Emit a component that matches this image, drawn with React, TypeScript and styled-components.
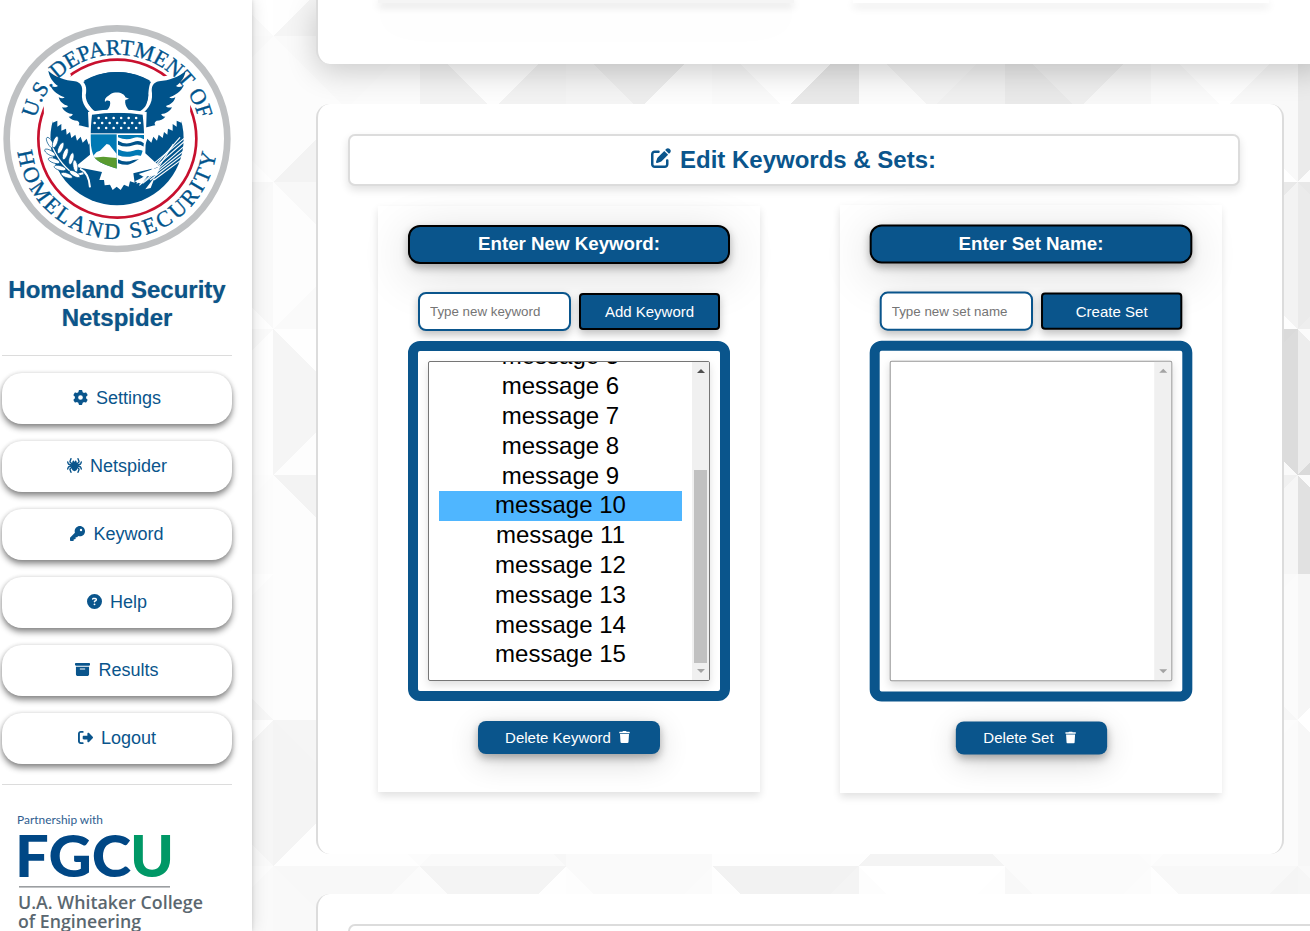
import React from "react";
import styled, { createGlobalStyle, css } from "styled-components";
import {
  FaGear,
  FaSpider,
  FaKey,
  FaCircleQuestion,
  FaBoxArchive,
  FaRightFromBracket,
  FaPenToSquare,
} from "react-icons/fa6";
import { FaTrash } from "react-icons/fa";

const BLUE = "#0a558c";

const GlobalStyle = createGlobalStyle`
  * { box-sizing: border-box; }
  html, body { margin: 0; height: 100%; overflow: hidden; }
  body { font-family: "Liberation Sans", Arial, sans-serif; background: #fff; color: #000; }
`;

const Page = styled.div`
  display: grid;
  grid-template-columns: 252px 1fr;
  height: 931px;
  overflow: hidden;
  isolation: isolate;
`;

/* ---------- background ---------- */

const Backdrop = styled.svg`
  position: absolute;
  left: 0;
  top: 0;
  z-index: -1;
  display: block;
`;

type Cell = [col: number, row: number, top: string, right: string, bottom: string, left: string];

const SIZE = 146.3;
const ROW_Y = [-110.2, 36.1, 182.4, 328.7, 475, 573.7, 720, 866.3];

const CELLS: Cell[] = [
  [-1, 0, "fff", "fff", "fbfbfb", "fff"],
  [0, 0, "fff", "fff", "f5f5f5", "fefefe"],
  [-1, 1, "fafafa", "fcfcfc", "fefefe", "fcfcfc"],
  [0, 1, "fafafa", "fbfbfb", "f3f3f3", "fcfcfc"],
  [1, 1, "fdfdfd", "f2f2f2", "f1f1f1", "f3f3f3"],
  [2, 1, "ededed", "fcfcfc", "f1f1f1", "f4f4f4"],
  [3, 1, "ffffff", "e9e9e9", "f1f1f1", "fafafa"],
  [4, 1, "f3f3f3", "f0f0f0", "f1f1f1", "fbfbfb"],
  [5, 1, "eeeeee", "f7f7f7", "f1f1f1", "e9e9e9"],
  [6, 1, "ffffff", "f9f9f9", "ffffff", "fbfbfb"],
  [7, 1, "ebebeb", "ebebeb", "fcfcfc", "ebebeb"],
  [-1, 2, "f8f8f8", "f9f9f9", "fefefe", "f8f8f8"],
  [0, 2, "f8f8f8", "fdfdfd", "fafafa", "fdfdfd"],
  [6, 2, "e9e9e9", "f3f3f3", "fdfdfd", "f3f3f3"],
  [7, 2, "e8e8e8", "ebebeb", "eeeeee", "ebebeb"],
  [-1, 3, "fafafa", "fefefe", "fefefe", "fefefe"],
  [0, 3, "fefefe", "f5f5f5", "fdfdfd", "f5f5f5"],
  [6, 3, "dadada", "dcdcdc", "fafafa", "dcdcdc"],
  [7, 3, "fbfbfb", "ededed", "dadada", "ededed"],
  [-1, 4, "fdfdfd", "fcfcfc", "fcfcfc", "fcfcfc"],
  [0, 4, "f3f3f3", "fdfdfd", "fdfdfd", "fdfdfd"],
  [6, 4, "f0f0f0", "f6f6f6", "f6f6f6", "f6f6f6"],
  [7, 4, "fbfbfb", "e1e1e1", "e1e1e1", "e1e1e1"],
  [-1, 5, "fefefe", "fcfcfc", "f7f7f7", "fcfcfc"],
  [0, 5, "fdfdfd", "fdfdfd", "fdfdfd", "fdfdfd"],
  [6, 5, "fafafa", "fbfbfb", "f7f7f7", "fbfbfb"],
  [7, 5, "f6f6f6", "f6f6f6", "ffffff", "f6f6f6"],
  [-1, 6, "fefefe", "f6f6f6", "fafafa", "f7f7f7"],
  [0, 6, "f5f5f5", "fcfcfc", "fefefe", "f4f4f4"],
  [1, 6, "fbfbfb", "f7f7f7", "fafafa", "fcfcfc"],
  [2, 6, "fafafa", "fafafa", "fafafa", "fafafa"],
  [3, 6, "fefefe", "fefefe", "fefefe", "fefefe"],
  [4, 6, "f4f4f4", "fbfbfb", "f4f4f4", "fefefe"],
  [5, 6, "fbfbfb", "fcfcfc", "fbfbfb", "fbfbfb"],
  [6, 6, "fcfcfc", "fbfbfb", "fbfbfb", "fdfdfd"],
  [7, 6, "ffffff", "f7f7f7", "f7f7f7", "f7f7f7"],
  [-1, 7, "fcfcfc", "fafafa", "fafafa", "fafafa"],
  [0, 7, "f8f8f8", "fbfbfb", "fafafa", "f9f9f9"],
  [1, 7, "f4f4f4", "fefefe", "fefefe", "fcfcfc"],
  [2, 7, "fafafa", "fbfbfb", "fefefe", "fdfdfd"],
  [3, 7, "f2f2f2", "f4f4f4", "fefefe", "fefefe"],
  [4, 7, "ffffff", "fefefe", "fefefe", "fdfdfd"],
  [5, 7, "fbfbfb", "fcfcfc", "fefefe", "f8f8f8"],
  [6, 7, "f8f8f8", "f5f5f5", "fefefe", "fefefe"],
  [7, 7, "f9f9f9", "f6f6f6", "f6f6f6", "f6f6f6"],
];

const Triangles = () => (
  <Backdrop width="1310" height="931" viewBox="0 0 1310 931" shapeRendering="crispEdges">
    {CELLS.map(([col, row, t, r, b, l]) => {
      const x = 273.4 + col * SIZE;
      const y = ROW_Y[row];
      const X = x + SIZE;
      const Y = row === 4 ? ROW_Y[5] : y + SIZE;
      const cx = x + SIZE / 2;
      const cy = y + SIZE / 2;
      return (
        <g key={`${col}:${row}`}>
          <path fill={`#${t}`} d={`M${x} ${y}H${X}L${cx} ${cy}Z`} />
          <path fill={`#${r}`} d={`M${X} ${y}V${Y}L${cx} ${cy}Z`} />
          <path fill={`#${b}`} d={`M${X} ${Y}H${x}L${cx} ${cy}Z`} />
          <path fill={`#${l}`} d={`M${x} ${Y}V${y}L${cx} ${cy}Z`} />
        </g>
      );
    })}
  </Backdrop>
);

/* ---------- sidebar ---------- */

const Sidebar = styled.aside`
  display: flex;
  flex-direction: column;
  height: 931px;
  padding: 20px 20px 0 2px;
  background: #fff;
  box-shadow: 0 0 4px rgba(0, 0, 0, 0.14), 0 0 16px rgba(0, 0, 0, 0.14);
`;

const Seal = styled.svg`
  flex: none;
  margin-left: -2px;
  width: 240px;
  height: 240px;
`;

const Brand = styled.h1`
  margin: 16px 0 0;
  font-size: 24px;
  line-height: 28px;
  font-weight: bold;
  text-align: center;
  color: ${BLUE};
  text-shadow: 0 0 1px rgba(0, 0, 0, 0.4);
  white-space: nowrap;
`;

const Rule = styled.hr<{ $top: number }>`
  width: 100%;
  height: 1px;
  margin: ${(p) => p.$top}px 0 0;
  border: 0;
  background: #dcdcdc;
  flex: none;
`;

const Nav = styled.nav`
  display: flex;
  flex-direction: column;
  gap: 17px;
  margin-top: 17px;
`;

const NavButton = styled.a`
  display: flex;
  align-items: center;
  justify-content: center;
  gap: 8px;
  height: 51px;
  border-radius: 20px;
  background: #fff;
  color: ${BLUE};
  font-size: 18px;
  box-shadow: 0 4px 6px rgba(0, 0, 0, 0.45), 0 0 4px rgba(0, 0, 0, 0.12);
  svg {
    width: 15px;
    height: 15px;
    margin-top: -3px;
  }
`;

const Partner = styled.svg`
  flex: none;
  display: block;
  margin: 27px 0 0 13px;
`;

const WING =
  "M145 152 C165 172 195 180 225 184 C243 188 249 200 246 220 C243 252 262 276 288 288 L278 322 C262 324 248 318 236 316 C240 310 238 306 232 302 C222 302 212 298 206 290 C214 290 218 286 218 282 C204 282 192 274 186 262 C196 264 202 262 204 258 C190 254 180 246 176 232 C184 236 190 236 194 232 C176 226 160 216 150 196 C160 202 168 202 174 198 C160 188 148 172 145 152Z";

const WING_BACK =
  "M130 176 L150 146 C170 165 205 168 240 172 C262 182 262 205 257 225 C257 252 276 268 300 276 L351 270 V400 L282 405 L274 364 L266 374 L260 356 L248 368 L242 350 L231 362 L226 344 L214 354 L210 336 L200 344 L198 326 L184 332 L184 312 L172 320 L172 302 L158 308 L156 298 L132 300Z";

const Emblem = () => (
  <Seal viewBox="0 0 720 720">
    <defs>
      <path id="arc-top" d="M106.5 295 A252 252 0 0 1 596.5 299.3" />
      <path id="arc-bottom" d="M52.5 395 A301 301 0 0 0 649.5 395" />
      <clipPath id="shield">
        <path d="M276 284 C325 276 380 276 428 284 C434 340 436 390 418 416 C398 432 374 438 351 446 C328 438 304 432 286 416 C268 390 270 340 276 284Z" />
      </clipPath>
    </defs>
    <circle cx="351" cy="356" r="331" fill="#fff" stroke="#bfc1c3" strokeWidth="20" />
    <circle cx="352" cy="356" r="237" fill="none" stroke="#c8102e" strokeWidth="8" />
    <circle cx="351" cy="356" r="200" fill="#00538b" />
    <path d={WING_BACK} fill="#fff" />
    <path d={WING_BACK} fill="#fff" transform="translate(702 0) scale(-1 1)" />
    <path d="M96 240 L152 232 L214 166 L170 120Z" fill="#fff" />
    <path d="M606 240 L553 236 L506 176 L540 120Z" fill="#fff" />
    <path d={WING} fill="#00538b" />
    <path d={WING} fill="#00538b" transform="translate(702 0) scale(-1 1)" />
    <path d="M250 186 C310 146 392 146 453 186 C440 206 452 250 428 268 C414 280 400 282 390 272 L312 272 C290 286 270 268 262 240 C258 214 262 200 250 186Z" fill="#00538b" />
    <path d="M315 246 C312 232 326 228 332 222 C350 212 374 220 376 232 L387 236 L376 240 C372 258 390 276 404 288 L298 288 C320 276 334 262 330 244 C324 240 318 240 315 246Z" fill="#fff" />
    <path d="M264 276 C325 266 380 266 440 276 L436 400 L480 440 L400 460 L404 488 L390 484 L386 500 L372 494 L362 510 L350 500 L338 510 L330 494 L314 496 L312 480 L298 480 L306 456 L226 440 L270 404Z" fill="#fff" />
    <g clipPath="url(#shield)">
      <rect x="268" y="276" width="170" height="64" fill="#00538b" />
      <g fill="#fff">
        {[0, 1, 2].map((r) =>
          Array.from({ length: r % 2 ? 7 : 6 }, (_, i) => (
            <circle key={`${r}-${i}`} cx={(r % 2 ? 284 : 296) + i * 22.5} cy={294 + r * 15} r="3.8" />
          ))
        )}
      </g>
      <rect x="268" y="343" width="82" height="110" fill="#0079b4" />
      <path d="M268 420 L290 396 L300 392 L320 372 L328 374 L350 402 V420Z" fill="#fff" />
      <path d="M268 414 L310 410 L350 414 V450 H268Z" fill="#5a9b2f" />
      <rect x="353" y="343" width="86" height="110" fill="#fff" />
      <path d="M354 345 H432 V358 Q415 348 400 354 Q378 362 354 352Z" fill="#0079b4" />
      <path d="M354 362 Q376 376 400 366 Q418 358 432 370 V380 Q415 370 400 376 Q376 384 354 374Z" fill="#00538b" />
      <path d="M354 388 Q376 400 400 392 Q418 386 432 394 V412 Q415 402 400 408 Q376 414 354 406Z" fill="#0079b4" />
      <path d="M354 418 Q376 430 400 420 L428 416 L400 432 Q376 438 354 430Z" fill="#00538b" />
    </g>
    <g stroke="#fff" strokeWidth="4" fill="none">
      <path d="M148 352 C160 400 190 440 226 466" />
      <path d="M240 446 C262 456 268 476 270 502" strokeWidth="6" />
      <path d="M226 466 L250 460" strokeWidth="6" />
    </g>
    <g fill="#fff" stroke="#00538b" strokeWidth="2">
      {[
        [150, 368, 60], [166, 366, 110], [182, 384, 115], [150, 398, 30], [196, 402, 110],
        [162, 422, 20], [214, 416, 105], [180, 444, 15], [226, 438, 80], [200, 466, 20], [224, 462, 30],
      ].map(([x, y, a]) => (
        <ellipse key={`${x}-${y}`} cx={x} cy={y} rx="18" ry="7" transform={`rotate(${a} ${x} ${y})`} />
      ))}
    </g>
    <g stroke="#fff" strokeWidth="3.4" fill="none">
      <path d="M410 490 L572 348" />
      <path d="M418 496 L572 362" />
      <path d="M428 490 L570 378" />
      <path d="M450 480 L566 392" />
      <path d="M462 480 L562 406" />
      <path d="M440 448 L556 352" />
      <path d="M456 448 L540 352" />
      <path d="M474 444 L520 372" />
    </g>
    <path d="M404 484 L446 464 L424 492Z M436 508 L466 468 L452 504Z M416 462 L480 440 L470 466 L430 470Z" fill="#fff" />
    <g fill="#00538b" fontFamily="'Liberation Serif', serif" fontSize="67" stroke="#00538b" strokeWidth="1">
      <text>
        <textPath href="#arc-top" textLength="670" lengthAdjust="spacingAndGlyphs">U.S. DEPARTMENT OF</textPath>
      </text>
      <text>
        <textPath href="#arc-bottom" textLength="862" lengthAdjust="spacing">HOMELAND SECURITY</textPath>
      </text>
    </g>
  </Seal>
);

const PartnerLogo = () => (
  <Partner width="210" height="122" viewBox="15 812 210 122">
    <g fontFamily="Lato, sans-serif">
      <text x="17" y="824" fontSize="11" fill="#2f5d8f" textLength="86" lengthAdjust="spacingAndGlyphs">
        Partnership with
      </text>
      <text x="15" y="877" fontSize="58" fontWeight="900" fill="#004785" textLength="116" lengthAdjust="spacingAndGlyphs">
        FGC
      </text>
      <text x="130" y="877" fontSize="58" fontWeight="900" fill="#009866" textLength="44" lengthAdjust="spacingAndGlyphs">
        U
      </text>
      <rect x="19" y="886" width="151" height="1.6" fill="#9b9ea1" />
      <g fill="#5b6770" fontSize="17.5" fontWeight="600" fontFamily="'Open Sans', sans-serif">
        <text x="18" y="909" textLength="185" lengthAdjust="spacingAndGlyphs">U.A. Whitaker College</text>
        <text x="18" y="928" textLength="123" lengthAdjust="spacingAndGlyphs">of Engineering</text>
      </g>
    </g>
  </Partner>
);

/* ---------- main column ---------- */

const Main = styled.main`
  display: flex;
  flex-direction: column;
  gap: 40px;
  padding-left: 64px;
  height: 931px;
  overflow: hidden;
  position: relative;
  z-index: -1;
`;

const panel = css`
  flex: none;
  border: solid #dcdcdc;
  border-width: 0 2px;
  background: #fff;
`;

const UpperPanel = styled.section`
  ${panel}
  display: flex;
  gap: 59px;
  width: 1010px;
  height: 64px;
  padding-left: 60px;
  border-radius: 0 0 14px 14px;
  box-shadow: 0 8px 30px rgba(0, 0, 0, 0.19);
`;

const UpperCard = styled.div<{ $raised?: boolean }>`
  width: 416px;
  height: 3px;
  background: ${(p) => (p.$raised ? "#f5f5f5" : "#fff")};
  box-shadow: ${(p) =>
    p.$raised
      ? "0 3px 8px rgba(0,0,0,.2), 0 12px 50px rgba(0,0,0,.14)"
      : "0 4px 8px rgba(0,0,0,.14)"};
`;

const EditPanel = styled.section`
  ${panel}
  width: 968px;
  height: 750px;
  padding: 30px 30px 0 30px;
  border-radius: 14px;
`;

const PanelTitle = styled.h2`
  display: flex;
  align-items: center;
  justify-content: center;
  gap: 9px;
  width: 892px;
  height: 52px;
  margin: 0;
  padding-right: 1px;
  border: 2px solid #dcdcdc;
  border-radius: 7px;
  background: #fff;
  color: ${BLUE};
  font-size: 24px;
  box-shadow: 0 4px 8px rgba(0, 0, 0, 0.12);
  svg {
    width: 20px;
    height: 20px;
    margin-top: -4px;
  }
`;

const Columns = styled.div`
  display: flex;
  gap: 80px;
  margin: 20px 0 0 30px;
`;

const Card = styled.div<{ $zoomed?: boolean }>`
  display: flex;
  flex-direction: column;
  align-items: center;
  flex: none;
  width: 382px;
  height: 586px;
  padding-top: 19px;
  box-shadow: 0 4px 8px rgba(0, 0, 0, 0.12);
  ${(p) => p.$zoomed && "transform: scale(1.002);"}
`;

const CardHeader = styled.h3`
  width: 322px;
  height: 39px;
  margin: 0;
  border: 2px solid #000;
  border-radius: 12px;
  background: ${BLUE};
  color: #fff;
  font-size: 18.72px;
  line-height: 33px;
  text-align: center;
  box-shadow: 0 4px 8px rgba(0, 0, 0, 0.3), 0 10px 50px rgba(0, 0, 0, 0.16);
`;

const EntryRow = styled.div`
  display: flex;
  align-items: center;
  gap: 8px;
  margin-top: 28px;
`;

const TextInput = styled.input`
  width: 153px;
  height: 39px;
  padding: 0 10px;
  border: 2px solid ${BLUE};
  border-radius: 8px;
  background: #fff;
  font: 13.333px "Liberation Sans", Arial, sans-serif;
  box-shadow: 0 4px 8px rgba(0, 0, 0, 0.25);
  &::placeholder {
    color: #757575;
  }
`;

const SubmitButton = styled.button`
  width: 141px;
  height: 37px;
  padding: 0;
  border: 2px solid #000;
  border-radius: 4px;
  background: ${BLUE};
  color: #fff;
  font: 15px "Liberation Sans", Arial, sans-serif;
  box-shadow: 0 4px 8px rgba(0, 0, 0, 0.25);
`;

const ListFrame = styled.div`
  width: 322px;
  height: 360px;
  margin-top: 10px;
  padding: 10px;
  border: 10px solid ${BLUE};
  border-radius: 12px;
`;

const ListBox = styled.div<{ $muted?: boolean }>`
  display: grid;
  grid-template-columns: 1fr 17px;
  height: 320px;
  border: 1px solid ${(p) => (p.$muted ? "#969696" : "#767676")};
  border-radius: 2px;
  background: #fff;
  overflow: hidden;
  box-shadow: 0 4px 8px rgba(0, 0, 0, 0.13);
`;

const Options = styled.ul`
  display: flex;
  flex-direction: column;
  justify-content: flex-end;
  height: 318px;
  margin: 0;
  padding: 0 10px 9.8px 10px;
  list-style: none;
  overflow: hidden;
`;

const Option = styled.li<{ $selected?: boolean }>`
  flex: none;
  height: 29.8px;
  font-size: 24px;
  line-height: 28.5px;
  text-align: center;
  background: ${(p) => (p.$selected ? "#4fb6ff" : "transparent")};
`;

const ScrollTrack = styled.div`
  display: flex;
  flex-direction: column;
  justify-content: space-between;
  align-items: center;
  padding: 7px 0 7px;
  background: #f0f0f0;
`;

const Arrow = styled.i<{ $down?: boolean; $faint?: boolean }>`
  width: 0;
  height: 0;
  border: solid transparent;
  border-width: ${(p) => (p.$down ? "4px 4px 0" : "0 4px 4px")};
  ${(p) => (p.$down ? "border-top-color" : "border-bottom-color")}: ${(p) => (p.$faint ? "#a3a3a3" : "#505050")};
`;

const Thumb = styled.div`
  width: 13px;
  height: 193px;
  margin: auto 0 6px;
  background: #c1c1c1;
`;

const DeleteButton = styled.button<{ $width: number; $gap: number }>`
  display: flex;
  align-items: center;
  justify-content: center;
  gap: ${(p) => p.$gap}px;
  width: ${(p) => p.$width}px;
  height: 33px;
  margin-top: 20px;
  padding: 0 3px 0 0;
  border: 0;
  border-radius: 8px;
  background: ${BLUE};
  color: #fff;
  font: 15px "Liberation Sans", Arial, sans-serif;
  box-shadow: 0 4px 8px rgba(0, 0, 0, 0.3), 0 8px 30px rgba(0, 0, 0, 0.16);
  svg {
    width: 11px;
    height: 12px;
    margin-top: -1px;
  }
`;

const LowerPanel = styled.section`
  ${panel}
  width: 1010px;
  height: 60px;
  padding: 30px 30px 0;
  border-radius: 14px 14px 0 0;
`;

const LowerTitle = styled.div`
  width: 978px;
  height: 52px;
  border: 2px solid #dcdcdc;
  border-radius: 7px;
`;

const NAV = [
  { label: "Settings", Icon: FaGear },
  { label: "Netspider", Icon: FaSpider },
  { label: "Keyword", Icon: FaKey },
  { label: "Help", Icon: FaCircleQuestion },
  { label: "Results", Icon: FaBoxArchive },
  { label: "Logout", Icon: FaRightFromBracket },
];

const MESSAGES = Array.from({ length: 11 }, (_, i) => i + 5);

export default function App() {
  return (
    <>
      <GlobalStyle />
      <Page>
        <Triangles />
        <Sidebar>
          <Emblem />
          <Brand>
            Homeland Security
            <br />
            Netspider
          </Brand>
          <Rule $top={23} />
          <Nav>
            {NAV.map(({ label, Icon }) => (
              <NavButton key={label}>
                <Icon />
                {label}
              </NavButton>
            ))}
          </Nav>
          <Rule $top={20} />
          <PartnerLogo />
        </Sidebar>
        <Main>
          <UpperPanel>
            <UpperCard $raised />
            <UpperCard />
          </UpperPanel>
          <EditPanel>
            <PanelTitle>
              <FaPenToSquare />
              Edit Keywords &amp; Sets:
            </PanelTitle>
            <Columns>
              <Card>
                <CardHeader>Enter New Keyword:</CardHeader>
                <EntryRow>
                  <TextInput placeholder="Type new keyword" />
                  <SubmitButton>Add Keyword</SubmitButton>
                </EntryRow>
                <ListFrame>
                  <ListBox>
                    <Options>
                      {MESSAGES.map((n) => (
                        <Option key={n} $selected={n === 10}>
                          message {n}
                        </Option>
                      ))}
                    </Options>
                    <ScrollTrack>
                      <Arrow />
                      <Thumb />
                      <Arrow $down $faint />
                    </ScrollTrack>
                  </ListBox>
                </ListFrame>
                <DeleteButton $width={182} $gap={8}>
                  Delete Keyword <FaTrash />
                </DeleteButton>
              </Card>
              <Card $zoomed>
                <CardHeader>Enter Set Name:</CardHeader>
                <EntryRow>
                  <TextInput placeholder="Type new set name" />
                  <SubmitButton>Create Set</SubmitButton>
                </EntryRow>
                <ListFrame>
                  <ListBox $muted>
                    <Options />
                    <ScrollTrack>
                      <Arrow $faint />
                      <Arrow $down $faint />
                    </ScrollTrack>
                  </ListBox>
                </ListFrame>
                <DeleteButton $width={151} $gap={11}>
                  Delete Set <FaTrash />
                </DeleteButton>
              </Card>
            </Columns>
          </EditPanel>
          <LowerPanel>
            <LowerTitle />
          </LowerPanel>
        </Main>
      </Page>
    </>
  );
}
